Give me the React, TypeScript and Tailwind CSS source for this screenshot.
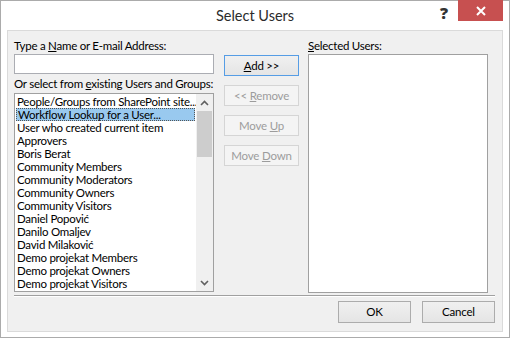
import React from "react";

const font = { fontFamily: 'Lato, "Noto Sans", sans-serif' };

const items = [
  "People/Groups from SharePoint site...",
  "Workflow Lookup for a User...",
  "User who created current item",
  "Approvers",
  "Boris Berat",
  "Community Members",
  "Community Moderators",
  "Community Owners",
  "Community Visitors",
  "Daniel Popović",
  "Danilo Omaljev",
  "David Milaković",
  "Demo projekat Members",
  "Demo projekat Owners",
  "Demo projekat Visitors",
];

function Btn({ children, disabled, primary, w = "w-[75px]", h = "h-[21px]" }: { children: React.ReactNode; disabled?: boolean; primary?: boolean; w?: string; h?: string }) {
  const cls = disabled
    ? "border-[#d5d5d5] bg-[#f4f4f4] text-[#9c9c9c]"
    : primary
    ? "border-[#569de5] bg-gradient-to-b from-[#f0f0f0] to-[#e5e5e5] text-black"
    : "border-[#acacac] bg-gradient-to-b from-[#f0f0f0] to-[#e5e5e5] text-black";
  return (
    <div className={`${w} ${h} border ${cls} flex items-center justify-center text-[11.5px] tracking-[-0.2px] leading-none`}>
      {children}
    </div>
  );
}

function Chevron({ up }: { up?: boolean }) {
  return (
    <svg width="9" height="6" viewBox="0 0 9 6">
      <path d={up ? "M1 5 L4.5 1.5 L8 5" : "M1 1 L4.5 4.5 L8 1"} fill="none" stroke="#606060" strokeWidth="1.6" />
    </svg>
  );
}

export default function App() {
  return (
    <div className="w-[510px] h-[338px] border border-[#ababab] bg-white flex flex-col text-black" style={font}>
      <div className="h-[29px] relative flex items-center justify-center">
        <span className="text-[14.5px] text-[#2b2b2b] leading-none pt-[1px]">Select Users</span>
        <span className="absolute left-[439px] top-[4px] text-[16px] font-black text-[#333] leading-none" style={{ fontFamily: '"Noto Sans", sans-serif' }}>?</span>
        <div className="absolute left-[457px] top-[-1px] w-[45px] h-[21px] bg-[#c75050] flex items-center justify-center">
          <svg width="10" height="10" viewBox="0 0 10 10">
            <path d="M1 1 L9 9 M9 1 L1 9" stroke="white" strokeWidth="2" />
          </svg>
        </div>
      </div>
      <div className="ml-[6px] w-[496px] h-[302px] border border-[#dadada] bg-[#f0f0f0] flex flex-col pl-[6px] pt-[7px] text-[11.5px] tracking-[-0.25px]">
        <div className="flex items-start">
          <div className="w-[200px] flex flex-col">
            <div className="h-[16px] leading-[16px] whitespace-nowrap">
              Type a <u>N</u>ame or E-mail Address:
            </div>
            <div className="h-[20px] border border-[#abadb3] bg-white" />
            <div className="mt-[2px] h-[16px] leading-[16px] whitespace-nowrap">
              Or select from <u>e</u>xisting Users and Groups:
            </div>
            <div className="mt-[1px] h-[199px] border border-[#a0a0a0] bg-white flex">
              <div className="flex-1 flex flex-col pt-[1px] overflow-hidden">
                {items.map((t, i) => (
                  <div
                    key={t}
                    className={
                      i === 1
                        ? "h-[13px] leading-[11px] mx-[1px] pl-[1px] bg-[#99c9ef] border border-dotted border-[#555] whitespace-nowrap"
                        : "h-[13px] leading-[13px] pl-[2px] whitespace-nowrap"
                    }
                  >
                    {t}
                  </div>
                ))}
              </div>
              <div className="w-[17px] bg-[#f0f0f0] flex flex-col">
                <div className="h-[17px] flex items-center justify-center">
                  <Chevron up />
                </div>
                <div className="mx-[1px] h-[46px] bg-[#cdcdcd]" />
                <div className="flex-1" />
                <div className="h-[17px] flex items-center justify-center">
                  <Chevron />
                </div>
              </div>
            </div>
          </div>
          <div className="ml-[10px] w-[75px] pt-[17px] flex flex-col gap-[9px]">
            <Btn primary>
              <span><u>A</u>dd &gt;&gt;</span>
            </Btn>
            <Btn disabled>
              <span>&lt;&lt; <u>R</u>emove</span>
            </Btn>
            <Btn disabled>
              <span>Move <u>U</u>p</span>
            </Btn>
            <Btn disabled>
              <span>Move <u>D</u>own</span>
            </Btn>
          </div>
          <div className="ml-[9px] w-[180px] flex flex-col">
            <div className="h-[16px] leading-[16px] whitespace-nowrap">
              <u>S</u>elected Users:
            </div>
            <div className="h-[239px] border border-[#a0a0a0] bg-white" />
          </div>
        </div>
        <div className="mt-[2px] w-[481px] border-t border-[#a0a0a0] border-b border-b-white" />
        <div className="mt-[4px] w-[481px] flex justify-end gap-[11px]">
          <Btn w="w-[73px]" h="h-[22px]">OK</Btn>
          <Btn w="w-[73px]" h="h-[22px]">Cancel</Btn>
        </div>
      </div>
    </div>
  );
}
